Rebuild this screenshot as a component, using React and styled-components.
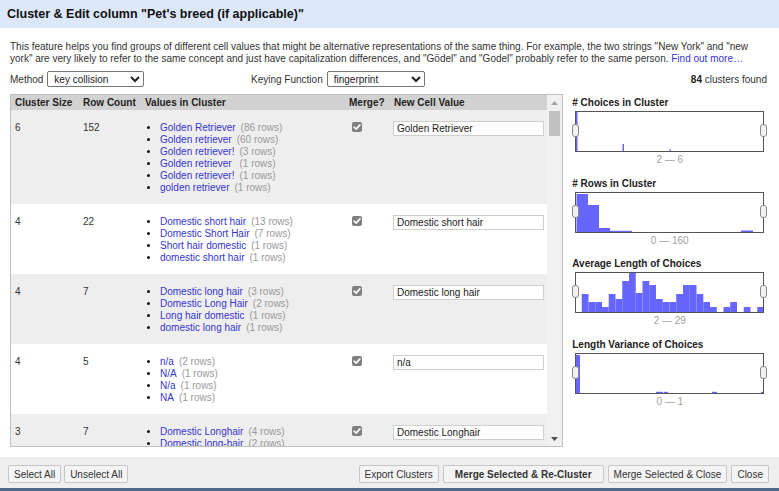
import React from 'react';
import styled, { createGlobalStyle } from 'styled-components';

const GlobalStyle = createGlobalStyle`
html, body {
  margin: 0;
  padding: 0;
  background: #fff;
}
body {
  font-family: "Liberation Sans", Arial, sans-serif;
  font-size: 10px;
  color: #333;
}
* {
  box-sizing: border-box;
}
`;

export const Dialog = styled.div`
width: 779px;
height: 491px;
display: flex;
flex-direction: column;
overflow: hidden;
background: #fff;
`;

export const Title = styled.h1`
margin: 0;
height: 28px;
line-height: 28px;
padding: 0 7px;
background: #dce8fa;
font-size: 12.5px;
font-weight: bold;
color: #111;
`;

export const Body = styled.div`
flex: 1;
min-height: 0;
display: flex;
flex-direction: column;
padding: 13px 12px 0 10px;
`;

export const Description = styled.p`
margin: 0;
line-height: 12px;
color: #333;
`;

export const Link = styled.a`
color: #3535d0;
text-decoration: none;
`;

export const Controls = styled.div`
display: flex;
align-items: center;
height: 16px;
margin-top: 6px;
`;

export const Field = styled.label`
display: flex;
align-items: center;
gap: 4px;
width: ${props => props.width || 'auto'};
`;

export const Select = styled.select`
width: ${props => props.width || '97px'};
height: 16px;
font-family: inherit;
font-size: 10px;
padding: 0 2px;
border: 1px solid #767676;
border-radius: 2px;
background: #fff;
color: #222;
`;

export const Found = styled.div`
margin-left: auto;
color: #333;
b {
  color: #222;
}
`;

export const Workspace = styled.div`
display: flex;
gap: 8px;
margin-top: 7px;
height: 353px;
`;

export const TableFrame = styled.div`
display: flex;
width: 554px;
height: 100%;
border: 1px solid #c0c0c0;
background: #fff;
`;

export const TableViewport = styled.div`
flex: 1;
min-width: 0;
overflow: hidden;
`;

export const ScrollRail = styled.div`
width: 15px;
display: flex;
flex-direction: column;
background: #f1f1f1;
`;

export const ScrollArrow = styled.div`
height: 15px;
display: flex;
align-items: center;
justify-content: center;
`;

export const ScrollThumb = styled.div`
height: 25px;
margin: 1px 2px 0 2px;
background: #c1c1c1;
`;

export const ScrollSpace = styled.div`
flex: 1;
`;

export const Table = styled.table`
width: 100%;
border-collapse: collapse;
table-layout: fixed;
`;

export const Th = styled.th`
background: #d2d2d2;
text-align: left;
font-weight: bold;
color: #222;
height: 15px;
line-height: 15px;
padding: 0 0 0 ${props => props.pad || 4}px;
white-space: nowrap;
`;

export const Tr = styled.tr`
background: ${props => (props.odd ? '#ffffff' : '#eeeeee')};
`;

export const Td = styled.td`
vertical-align: top;
padding: 12px 0 10px ${props => props.pad || 4}px;
line-height: 12px;
color: #333;
`;

export const Choices = styled.ul`
margin: 0;
padding: 0 0 0 15px;
list-style: disc;
li::marker {
  color: #111;
}
`;

export const Choice = styled.li`
line-height: 12px;
white-space: nowrap;
`;

export const ChoiceName = styled.span`
color: #3535d0;
`;

export const ChoiceCount = styled.span`
color: #999;
margin-left: 5px;
`;

export const CheckBox = styled.span`
display: inline-block;
width: 10px;
height: 10px;
margin: 0 0 0 3px;
border-radius: 2px;
background: #808080;
svg {
  display: block;
}
`;

export const ValueInput = styled.input`
display: block;
width: 151px;
height: 15px;
margin-top: -1px;
padding: 0 3px;
border: 1px solid #cfcfcf;
font-family: inherit;
font-size: 10px;
color: #222;
background: #fff;
`;

export const Side = styled.div`
width: 196px;
padding: 3px 0 0 1px;
`;

export const HistTitle = styled.div`
font-weight: bold;
line-height: 12px;
color: #222;
`;

export const HistBox = styled.div`
position: relative;
width: 189px;
height: 41px;
margin: 2px 0 0 3px;
border: 1px solid #555;
background: #fff;
svg {
  display: block;
}
`;

export const Handle = styled.span`
position: absolute;
top: 12px;
${props => (props.side === 'right' ? 'right: -4px;' : 'left: -4px;')}
width: 7px;
height: 13px;
border: 1px solid #8a8a8a;
border-radius: 3px;
background: #f2f2f2;
::after {
  content: "";
  position: absolute;
  left: 1.5px;
  top: 2px;
  width: 2px;
  height: 7px;
  background: #9a9a9a;
}
`;

export const Range = styled.div`
text-align: center;
color: #a0a0a0;
line-height: 16px;
margin: 0 0 9.5px 3px;
width: 189px;
`;

export const Footer = styled.div`
display: flex;
justify-content: space-between;
height: 34px;
padding: 8px 10px 0 8px;
background: #eeeeee;
border-bottom: 3px solid #4c6b8a;
`;

export const ButtonGroup = styled.div`
display: flex;
gap: ${props => props.gap || 3}px;
`;

export const Button = styled.button`
height: 18px;
padding: 0 ${props => (props.primary ? 11 : 5)}px;
font-family: inherit;
font-size: 10px;
font-weight: ${props => (props.primary ? 'bold' : 'normal')};
color: #333;
background: #f4f4f4;
border: 1px solid #c6c6c6;
border-radius: 2px;
`;

const clusters = [
  {
    size: 6, rows: 152, value: 'Golden Retriever',
    choices: [['Golden Retriever', 86], ['Golden retriever', 60], ['Golden retriever!', 3], ['Golden retriever ', 1], ['Golden retriever!', 1], ['golden retriever', 1]],
  },
  {
    size: 4, rows: 22, value: 'Domestic short hair',
    choices: [['Domestic short hair', 13], ['Domestic Short Hair', 7], ['Short hair domestic', 1], ['domestic short hair', 1]],
  },
  {
    size: 4, rows: 7, value: 'Domestic long hair',
    choices: [['Domestic long hair', 3], ['Domestic Long Hair', 2], ['Long hair domestic', 1], ['domestic long hair', 1]],
  },
  {
    size: 4, rows: 5, value: 'n/a',
    choices: [['n/a', 2], ['N/A', 1], ['N/a', 1], ['NA', 1]],
  },
  {
    size: 3, rows: 7, value: 'Domestic Longhair',
    choices: [['Domestic Longhair', 4], ['Domestic long-hair', 2], ['domestic longhair', 1]],
  },
  {
    size: 3, rows: 6, value: 'Labrador Retriever',
    choices: [['Labrador Retriever', 3], ['labrador retriever', 2], ['Labrador retriever', 1]],
  },
];

const avgHeights = [0, 18, 10, 10, 5, 18, 13, 31, 39, 19, 31, 27, 13, 10, 10, 18, 27, 27, 18, 10, 5, 0, 5, 10, 0, 5, 0, 5];

const histograms = [
  {
    title: '# Choices in Cluster', range: '2 \u2014 6',
    bars: [[0, 1.5, 39], [46.5, 1.5, 7], [93.5, 1.5, 1.5]],
  },
  {
    title: '# Rows in Cluster', range: '0 \u2014 160',
    bars: [[0.5, 11.5, 38], [12, 11, 27], [23, 11, 4], [34, 22, 1.2], [165, 12, 1.5]],
  },
  {
    title: 'Average Length of Choices', range: '2 \u2014 29',
    bars: avgHeights.map((h, i) => [i * 6.75 - 1, 6.75, h]),
  },
  {
    title: 'Length Variance of Choices', range: '0 \u2014 1',
    bars: [[0, 4, 38], [80, 7, 1.2], [88, 4, 1.2], [136, 5, 1.2], [185, 2, 1.2]],
  },
];

const Check = () => (
  <CheckBox>
    <svg width="10" height="10" viewBox="0 0 10 10">
      <path d="M2.2 5.2 L4.2 7.1 L7.9 2.9" fill="none" stroke="#fff" strokeWidth="1.6" strokeLinecap="round" strokeLinejoin="round" />
    </svg>
  </CheckBox>
);

const Arrow = ({ down }) => (
  <ScrollArrow>
    <svg width="7" height="4" viewBox="0 0 7 4">
      <path d={down ? 'M0 0 H7 L3.5 4 Z' : 'M0 4 H7 L3.5 0 Z'} fill={down ? '#505050' : '#a3a3a3'} />
    </svg>
  </ScrollArrow>
);

const Histogram = ({ title, range, bars }) => (
  <div>
    <HistTitle>{title}</HistTitle>
    <HistBox>
      <svg width="187" height="39" viewBox="0 0 187 39">
        {bars.filter(b => b[2] > 0).map(([x, w, h], i) => (
          <rect key={i} x={x} y={39 - h} width={w} height={h} fill="#6666ff" />
        ))}
      </svg>
      <Handle side="left" />
      <Handle side="right" />
    </HistBox>
    <Range>{range}</Range>
  </div>
);

export default function App() {
  return (
    <Dialog>
      <GlobalStyle />
      <Title>Cluster &amp; Edit column "Pet's breed (if applicable)"</Title>
      <Body>
        <Description>
          This feature helps you find groups of different cell values that might be alternative representations of the same thing. For example, the two strings "New York" and "new york" are very likely to refer to the same concept and just have capitalization differences, and "Gödel" and "Godel" probably refer to the same person. <Link href="#">Find out more…</Link>
        </Description>
        <Controls>
          <Field width="241px">
            Method
            <Select width="97px" defaultValue="key collision">
              <option>key collision</option>
              <option>nearest neighbor</option>
            </Select>
          </Field>
          <Field>
            Keying Function
            <Select width="98px" defaultValue="fingerprint">
              <option>fingerprint</option>
              <option>ngram-fingerprint</option>
              <option>metaphone3</option>
              <option>cologne-phonetic</option>
            </Select>
          </Field>
          <Found><b>84</b> clusters found</Found>
        </Controls>
        <Workspace>
          <TableFrame>
            <TableViewport>
              <Table>
                <colgroup>
                  <col style={{ width: 67 }} />
                  <col style={{ width: 62 }} />
                  <col style={{ width: 205 }} />
                  <col style={{ width: 44 }} />
                  <col />
                </colgroup>
                <thead>
                  <tr>
                    <Th>Cluster Size</Th>
                    <Th pad={5}>Row Count</Th>
                    <Th pad={5}>Values in Cluster</Th>
                    <Th>Merge?</Th>
                    <Th pad={5}>New Cell Value</Th>
                  </tr>
                </thead>
                <tbody>
                  {clusters.map((c, i) => (
                    <Tr key={i} odd={i % 2 === 1}>
                      <Td>{c.size}</Td>
                      <Td pad={5}>{c.rows}</Td>
                      <Td pad={5}>
                        <Choices>
                          {c.choices.map(([name, n], j) => (
                            <Choice key={j}>
                              <ChoiceName>{name}</ChoiceName>
                              <ChoiceCount>({n} rows)</ChoiceCount>
                            </Choice>
                          ))}
                        </Choices>
                      </Td>
                      <Td pad={4}><Check /></Td>
                      <Td pad={4}><ValueInput defaultValue={c.value} /></Td>
                    </Tr>
                  ))}
                </tbody>
              </Table>
            </TableViewport>
            <ScrollRail>
              <Arrow />
              <ScrollThumb />
              <ScrollSpace />
              <Arrow down />
            </ScrollRail>
          </TableFrame>
          <Side>
            {histograms.map(h => (
              <Histogram key={h.title} {...h} />
            ))}
          </Side>
        </Workspace>
      </Body>
      <Footer>
        <ButtonGroup>
          <Button>Select All</Button>
          <Button>Unselect All</Button>
        </ButtonGroup>
        <ButtonGroup gap={4}>
          <Button>Export Clusters</Button>
          <Button primary>Merge Selected &amp; Re-Cluster</Button>
          <Button>Merge Selected &amp; Close</Button>
          <Button>Close</Button>
        </ButtonGroup>
      </Footer>
    </Dialog>
  );
}
